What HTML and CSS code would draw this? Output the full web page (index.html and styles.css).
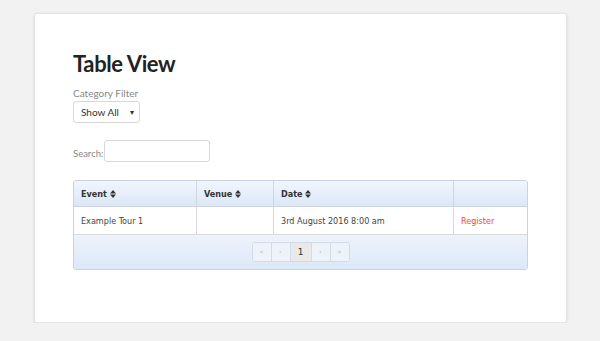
FILE: index.html
```html
<!DOCTYPE html>
<html lang="en">
<head>
    <meta charset="UTF-8">
    <title>Table View</title>
    <link rel="stylesheet" href="styles.css">
</head>
<body>
    <div class="card">
        <h1>Table View</h1>
        <label class="field-label" for="category">Category Filter</label>
        <div class="select-box">
            <span>Show All</span>
            <span class="caret">&#9662;</span>
        </div>

        <div class="search">
            <label for="search">Search:</label>
            <input type="text" id="search">
        </div>

        <div class="table-wrap">
            <table>
                <thead>
                    <tr>
                        <th class="col-event">Event <svg class="sort" viewBox="0 0 6 8"><path d="M0 3.4L3 0L6 3.4ZM0 4.6L3 8L6 4.6Z"/></svg></th>
                        <th class="col-venue">Venue <svg class="sort" viewBox="0 0 6 8"><path d="M0 3.4L3 0L6 3.4ZM0 4.6L3 8L6 4.6Z"/></svg></th>
                        <th class="col-date">Date <svg class="sort" viewBox="0 0 6 8"><path d="M0 3.4L3 0L6 3.4ZM0 4.6L3 8L6 4.6Z"/></svg></th>
                        <th></th>
                    </tr>
                </thead>
                <tbody>
                    <tr>
                        <td>Example Tour 1</td>
                        <td></td>
                        <td>3rd August 2016 8:00 am</td>
                        <td><a href="#" class="register">Register</a></td>
                    </tr>
                </tbody>
            </table>
            <div class="table-foot">
                <div class="pager">
                    <span class="page">&laquo;</span>
                    <span class="page">&lsaquo;</span>
                    <span class="page active">1</span>
                    <span class="page">&rsaquo;</span>
                    <span class="page">&raquo;</span>
                </div>
            </div>
        </div>
    </div>
</body>
</html>
```

FILE: styles.css
```css
body {
    margin: 0;
    background: #f2f2f2;
    font-family: Lato, "Open Sans", sans-serif;
}
.card {
    width: 455px;
    margin: 13px 0 0 34px;
    padding: 35px 38px 52px 38px;
    background: #fff;
    border: 1px solid #e4e4e4;
    border-radius: 3px;
    box-shadow: 0 1px 3px rgba(0, 0, 0, 0.12);
}
h1 {
    margin: 0 0 8px 0;
    font-size: 22px;
    font-weight: 700;
    color: #222;
    line-height: 30px;
    letter-spacing: -0.4px;
}
.field-label {
    display: block;
    font-size: 10px;
    color: #888;
    line-height: 12px;
    margin-bottom: 2px;
}
.select-box {
    width: 53px;
    height: 20px;
    padding: 0 5px 0 7px;
    border: 1px solid #d8d8d8;
    border-radius: 3px;
    display: flex;
    align-items: center;
    justify-content: space-between;
    font-size: 10px;
    color: #333;
}
.caret {
    font-size: 8px;
}
.search {
    display: flex;
    align-items: center;
    margin-top: 17px;
    gap: 1px;
}
.search label {
    font-size: 9.5px;
    color: #888;
    padding-top: 4px;
}
.search input {
    width: 98px;
    height: 18px;
    padding: 1px 3px;
    margin: 0;
    border: 1px solid #d8d8d8;
    border-radius: 3px;
}
.table-wrap {
    margin-top: 18px;
    border: 1px solid #c9d3df;
    border-radius: 3px;
    overflow: hidden;
}
table {
    width: 100%;
    border-collapse: collapse;
    font-family: "DejaVu Sans Condensed", "DejaVu Sans", sans-serif;
    font-size: 9px;
}
th {
    text-align: left;
    height: 25px;
    padding: 0 7px;
    color: #333;
    font-weight: bold;
    background: linear-gradient(to bottom, #f1f6fd, #dbe7f7);
    border-right: 1px solid #cfd6df;
    border-bottom: 1px solid #cfd6df;
}
th:last-child, td:last-child {
    border-right: none;
}
.col-event { width: 108px; }
.col-venue { width: 62px; }
.col-date { width: 165px; }
.sort {
    width: 6px;
    height: 8px;
    vertical-align: -1px;
    fill: #333;
}
td {
    height: 27px;
    padding: 0 7px;
    color: #444;
    border-right: 1px solid #d9d9d9;
    border-bottom: 1px solid #d9d9d9;
}
.register {
    color: #ff4040;
    text-decoration: none;
}
.table-foot {
    height: 34px;
    display: flex;
    align-items: center;
    justify-content: center;
    background: linear-gradient(to bottom, #edf3fb, #dce8f8);
}
.pager {
    display: flex;
    border: 1px solid #d4dbe4;
    border-radius: 3px;
    overflow: hidden;
}
.page {
    width: 18px;
    height: 18px;
    line-height: 18px;
    text-align: center;
    font-family: "DejaVu Sans", sans-serif;
    font-size: 7px;
    color: #bbb;
    background: #eef3fa;
    border-right: 1px solid #d4dbe4;
}
.page:last-child {
    border-right: none;
}
.page.active {
    width: 20px;
    background: #e9e9e9;
    color: #333;
    font-size: 9px;
}
```
